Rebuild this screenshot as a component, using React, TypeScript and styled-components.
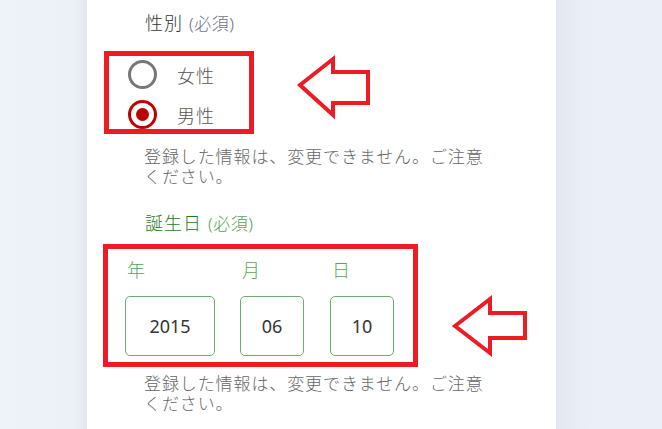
import React from "react";
import styled, { createGlobalStyle } from "styled-components";

const GlobalStyle = createGlobalStyle`
  html, body {
    margin: 0;
    padding: 0;
    background: #ebeff8;
    font-family: "Noto Sans", "Noto Sans CJK JP", sans-serif;
  }
`;

const Page = styled.div`
  display: flex;
  width: 662px;
  height: 429px;
  overflow: hidden;
  background: #ebeff8;
`;

const LeftGutter = styled.div`
  width: 87px;
  flex-shrink: 0;
  background: linear-gradient(to right, #eef2f9 0%, #ecf0f7 85%, #e2e6ee 100%);
`;

const RightGutter = styled.div`
  flex: 1;
  background: linear-gradient(to right, #e2e7f0 0px, #e9edf6 22px, #ebeff8 40px);
`;

const Card = styled.div`
  width: 469px;
  flex-shrink: 0;
  background: #ffffff;
  padding-top: 10px;
  box-sizing: border-box;
`;

const Title = styled.div<{ $green?: boolean; $top?: number }>`
  margin: ${(p) => p.$top ?? 0}px 0 0 58px;
  font-family: "Noto Sans CJK JP", sans-serif;
  font-weight: 300;
  font-size: 18px;
  line-height: 24px;
  letter-spacing: 1px;
  color: ${(p) => (p.$green ? "#1f7d22" : "#333333")};
`;

const Required = styled.span<{ $green?: boolean }>`
  font-family: "Noto Sans", "Noto Sans CJK JP", sans-serif;
  font-size: 17px;
  letter-spacing: 0.5px;
  margin-left: 6px;
  color: ${(p) => (p.$green ? "#5aa35c" : "#6f6f86")};
`;

const AnnotatedRow = styled.div<{ $top: number }>`
  display: flex;
  align-items: flex-start;
  margin-top: ${(p) => p.$top}px;
`;

const RedBox = styled.div<{ $left: number }>`
  box-sizing: border-box;
  margin-left: ${(p) => p.$left}px;
  border: 5px solid #ed1c24;
`;

const RadioBox = styled(RedBox)`
  width: 150px;
  height: 83px;
  display: flex;
  flex-direction: column;
  gap: 11px;
  padding: 4px 0 0 19px;
`;

const RadioRow = styled.label`
  display: flex;
  align-items: center;
  gap: 20px;
  height: 29px;
`;

const RadioCircle = styled.span<{ $checked?: boolean }>`
  box-sizing: border-box;
  width: 29px;
  height: 29px;
  border-radius: 50%;
  border: 3px solid ${(p) => (p.$checked ? "#c00000" : "#777777")};
  display: flex;
  align-items: center;
  justify-content: center;
  &::after {
    content: "";
    display: ${(p) => (p.$checked ? "block" : "none")};
    width: 13px;
    height: 13px;
    border-radius: 50%;
    background: #c00000;
  }
`;

const RadioLabel = styled.span`
  font-family: "Noto Sans CJK JP", sans-serif;
  font-weight: 300;
  font-size: 18px;
  letter-spacing: 1px;
  color: #555555;
`;

const Note = styled.div<{ $top: number }>`
  margin: ${(p) => p.$top}px 0 0 57px;
  width: 352px;
  font-family: "Noto Sans CJK JP", sans-serif;
  font-weight: 300;
  font-size: 17px;
  line-height: 20px;
  letter-spacing: 0.9px;
  color: #666666;
`;

const DateBox = styled(RedBox)`
  width: 315px;
  height: 123px;
  display: flex;
  padding: 9px 0 0 17px;
`;

const DateColumn = styled.div<{ $gap: number }>`
  display: flex;
  flex-direction: column;
  gap: 16px;
  margin-right: ${(p) => p.$gap}px;
`;

const DateLabel = styled.div`
  padding-left: 2px;
  font-family: "Noto Sans CJK JP", sans-serif;
  font-weight: 300;
  font-size: 18px;
  line-height: 22px;
  color: #5aa35c;
`;

const DateInput = styled.div<{ $width: number }>`
  box-sizing: border-box;
  width: ${(p) => p.$width}px;
  height: 60px;
  border: 1px solid #6aae6c;
  border-radius: 5px;
  display: flex;
  align-items: center;
  justify-content: center;
  font-family: "Noto Sans", sans-serif;
  font-size: 18px;
  color: #333333;
`;

const ArrowSvg = styled.svg<{ $left: number; $top: number }>`
  flex-shrink: 0;
  margin-left: ${(p) => p.$left}px;
  margin-top: ${(p) => p.$top}px;
`;

const Arrow: React.FC<{ left: number; top: number; points: string; w: number; h: number }> = ({
  left,
  top,
  points,
  w,
  h
}) => (
  <ArrowSvg $left={left} $top={top} width={w} height={h} viewBox={`0 0 ${w} ${h}`}>
    <polygon points={points} fill="none" stroke="#ed1c24" strokeWidth={4} strokeLinejoin="miter" />
  </ArrowSvg>
);

const NOTE = "登録した情報は、変更できません。ご注意ください。";

const dateFields = [
  { label: "年", value: "2015", width: 90, gap: 25 },
  { label: "月", value: "06", width: 64, gap: 26 },
  { label: "日", value: "10", width: 64, gap: 0 }
];

const App: React.FC = () => {
  return (
    <>
      <GlobalStyle />
      <Page>
        <LeftGutter />
        <Card>
          <Title>
            性別<Required>(必須)</Required>
          </Title>
          <AnnotatedRow $top={15}>
            <RadioBox $left={17}>
              <RadioRow>
                <RadioCircle />
                <RadioLabel>女性</RadioLabel>
              </RadioRow>
              <RadioRow>
                <RadioCircle $checked />
                <RadioLabel>男性</RadioLabel>
              </RadioRow>
            </RadioBox>
            <Arrow
              left={40}
              top={3}
              w={80}
              h={66}
              points="6,31 39,5 39,18 74,18 74,49 39,49 39,61"
            />
          </AnnotatedRow>
          <Note $top={12}>{NOTE}</Note>

          <Title $green $top={24}>
            誕生日<Required $green>(必須)</Required>
          </Title>
          <AnnotatedRow $top={8}>
            <DateBox $left={16}>
              {dateFields.map((f) => (
                <DateColumn key={f.label} $gap={f.gap}>
                  <DateLabel>{f.label}</DateLabel>
                  <DateInput $width={f.width}>{f.value}</DateInput>
                </DateColumn>
              ))}
            </DateBox>
            <Arrow
              left={31}
              top={50}
              w={82}
              h={64}
              points="6,32 41,5 41,19 76,19 76,44 41,44 41,59"
            />
          </AnnotatedRow>
          <Note $top={6}>{NOTE}</Note>
        </Card>
        <RightGutter />
      </Page>
    </>
  );
};

export default App;
